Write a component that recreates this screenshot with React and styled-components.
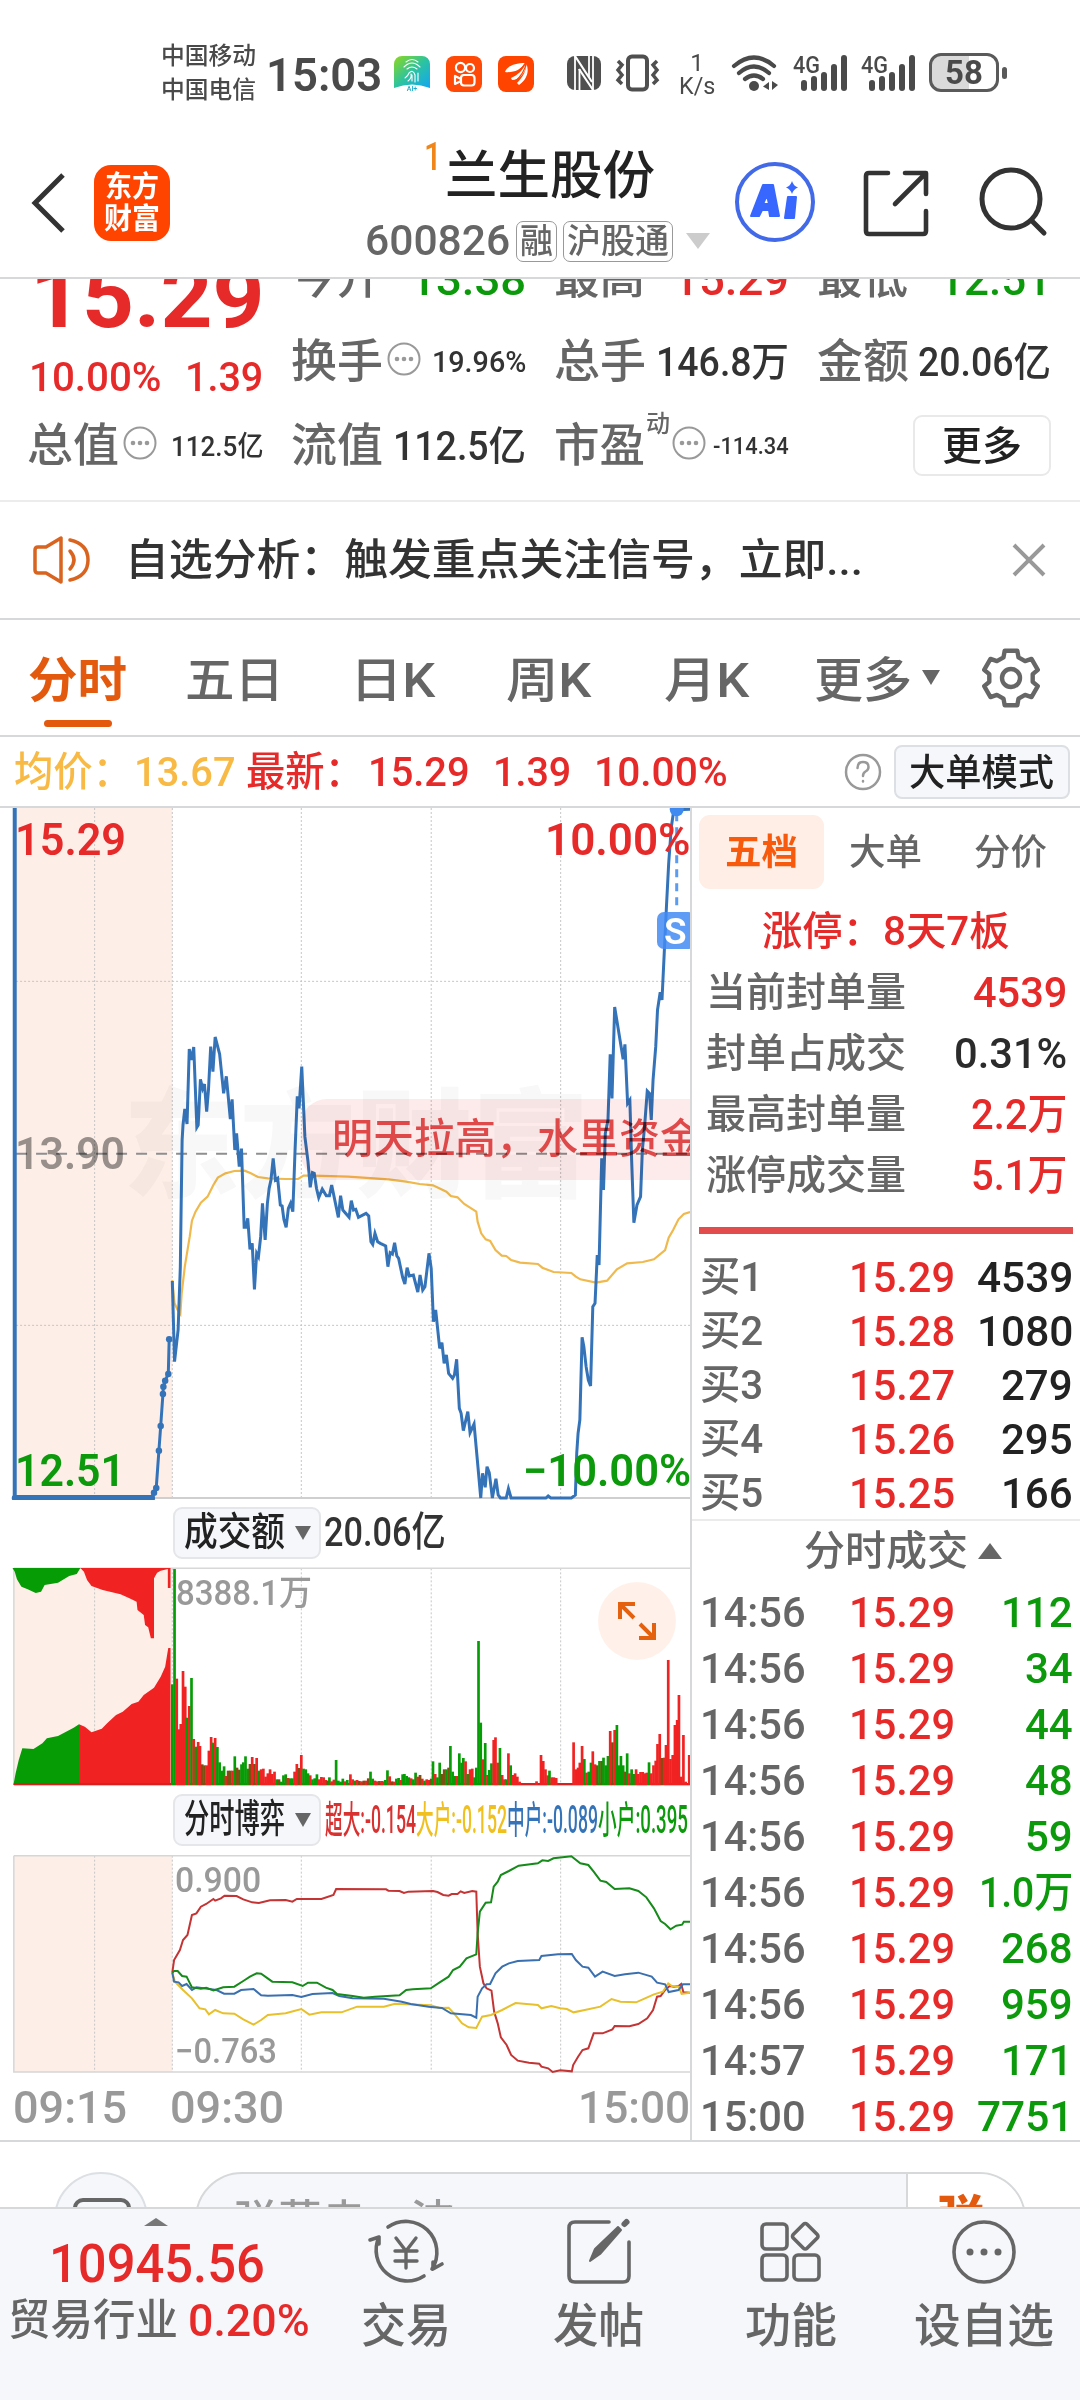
import React, { useLayoutEffect, useRef, useState } from "react";
import styled, { createGlobalStyle } from "styled-components";

const RED = "#e62a2a";
const GREEN = "#0c9a0c";
const GREY = "#666";
const INK = "#2b2b2b";
const ORANGE = "#e3590e";
const BLUE = "#3573b9";
const LINE = "#d6d8da";
const SOFT = "#f6f7fa";

const GlobalStyle = createGlobalStyle`
  * { box-sizing: border-box; }
  html, body { margin: 0; padding: 0; background: #fff; overflow-x: hidden; }
  body {
    font-family: Roboto, "Noto Sans CJK SC", sans-serif;
    font-weight: 500;
    line-height: 1;
    color: ${INK};
  }
`;

// Text squeezed or stretched to an exact width, like the auto-sizing labels on the phone
const FitBox = styled.span`
  display: block;
  flex: none;
  white-space: nowrap;
`;

const FitInner = styled.span`
  display: inline-block;
  transform-origin: left center;
`;

function Fit({ w, className, children }) {
  const ref = useRef(null);
  const [scale, setScale] = useState(1);
  useLayoutEffect(() => {
    setScale(w / ref.current.offsetWidth);
  }, [w, children]);
  return (
    <FitBox className={className} style={{ width: w }}>
      <FitInner ref={ref} style={{ transform: `scaleX(${scale})` }}>
        {children}
      </FitInner>
    </FitBox>
  );
}

const Screen = styled.div`
  width: 1080px;
  height: 2400px;
  overflow: hidden;
  display: flex;
  flex-direction: column;
  background: #fff;
`;

/* ---------- status bar ---------- */

const StatusBar = styled.div`
  height: 148px;
  flex: none;
  display: flex;
  align-items: flex-start;
  padding: 44px 0 0 161px;
  color: #4a4a4a;
`;

const Carriers = styled.div`
  display: flex;
  flex-direction: column;
  gap: 10px;
  font-size: 24px;
`;

const Clock = styled(Fit)`
  font-size: 47px;
  font-weight: 600;
  margin: 7px 12px 0 10px;
`;

const AppIcon = styled.svg`
  width: 36px;
  height: 36px;
  margin: 12px 16px 0 0;
  flex: none;
`;

const StatusIcon = styled.svg`
  flex: none;
  margin: 10px 0 0 ${(p) => p.$ml || 0}px;
`;

const NetSpeed = styled.div`
  width: 36px;
  margin: 8px 0 0 18px;
  display: flex;
  flex-direction: column;
  align-items: center;
  font-size: 24px;
  line-height: 23px;
  font-weight: 400;
`;

const Signal = styled.div`
  display: flex;
  align-items: flex-end;
  margin: 10px 0 0 ${(p) => p.$ml}px;
  height: 38px;
  flex: none;
`;

const SignalTag = styled(Fit)`
  align-self: flex-start;
  font-size: 24px;
  margin-top: -1px;
`;

const SignalSteps = styled.svg`
  margin-left: -19px;
`;

const Battery = styled.div`
  width: 70px;
  height: 39px;
  margin: 9px 0 0 13px;
  border: 3px solid #5a5a5a;
  border-radius: 12px;
  background: linear-gradient(to right, #dadada 58%, #fff 58%);
  display: flex;
  align-items: center;
  justify-content: center;
  font-size: 33px;
  font-weight: 700;
  flex: none;
`;

const BatteryTip = styled.div`
  width: 5px;
  height: 12px;
  border-radius: 3px;
  background: #5a5a5a;
  margin: 23px 0 0 3px;
`;

function SignalBars({ ml }) {
  return (
    <Signal $ml={ml}>
      <SignalTag w={27}>4G</SignalTag>
      <SignalSteps width="47" height="38" viewBox="0 0 47 38">
        {[11, 15, 19, 27, 36].map((h, i) => (
          <rect key={h} x={i * 10} y={37 - h} width="6" height={h} rx="3" fill="#4a4a4a" />
        ))}
      </SignalSteps>
    </Signal>
  );
}

function Status() {
  return (
    <StatusBar>
      <Carriers>
        <Fit w={95}>中国移动</Fit>
        <Fit w={95}>中国电信</Fit>
      </Carriers>
      <Clock w={116}>15:03</Clock>
      <AppIcon viewBox="0 0 36 36">
        <defs>
          <linearGradient id="finger" x1="0" y1="0" x2="1" y2="1">
            <stop offset="0" stopColor="#8fd81c" />
            <stop offset=".5" stopColor="#2cc3a0" />
            <stop offset="1" stopColor="#12a5f5" />
          </linearGradient>
        </defs>
        <path d="M8 0h20a8 8 0 0 1 8 8v24q-18-7-36 0V8a8 8 0 0 1 8-8z" fill="url(#finger)" />
        <g fill="none" stroke="#fff" strokeWidth="1.1" strokeLinecap="round">
          <path d="M12 6q6-5 12 0M10 11q8-8 16 0M13 13q5-4 10 0" />
          <path d="M11 22q3-2 4-5q4-4 6 2v7M14 25q4-3 3-7M18 19v6M24 17v8" />
        </g>
        <text x="18" y="35" fontSize="7" textAnchor="middle" fill="#1ba9c9" fontFamily="Roboto">AI+</text>
      </AppIcon>
      <AppIcon viewBox="0 0 36 36">
        <rect width="36" height="36" rx="8" fill="#ff4906" />
        <g fill="none" stroke="#fff" strokeWidth="2.2">
          <circle cx="14.500" cy="11.500" r="4.600" />
          <circle cx="24" cy="12" r="4" />
          <rect x="15" y="19" width="13.500" height="10.500" rx="3" />
          <path d="M15 23l-6-3v8l6-3" strokeLinejoin="round" />
        </g>
      </AppIcon>
      <AppIcon viewBox="0 0 36 36">
        <rect width="36" height="36" rx="8" fill="#ff4400" />
        <path d="M7 16C9 10 17 7 27 7C23 14 15 17 7 16zM13 22C20 19 25 14 27.500 8C29 15 22 24 14 24zM19 27C25 21 28 15 28.500 8C31 14 30 23 21 29z" fill="#fff" />
        <path d="M12 19.500C19 17 24 13 27 7.500M17 25.500C23 20 27 14 28 8" fill="none" stroke="#ff4400" strokeWidth="1.300" />
      </AppIcon>
      <StatusIcon width="34" height="38" viewBox="0 -1 34 38" $ml={17}>
        <rect y="1" width="34" height="34" rx="8" fill="#4f4f4f" />
        <path d="M8 1V35M26 35V1" fill="none" stroke="#fff" strokeWidth="1.800" />
        <path d="M8 1L25 27M12 14L26 35" fill="none" stroke="#fff" strokeWidth="2.200" />
        <path d="M12.500 14V35M22 1V22" fill="none" stroke="#fff" strokeWidth="1.800" />
      </StatusIcon>
      <StatusIcon width="46" height="38" viewBox="0 0 46 38" $ml={14}>
        <rect x="13" y="2.500" width="19" height="33" rx="4" fill="none" stroke="#4f4f4f" strokeWidth="4" />
        <path d="M3 7l4 4-4 5 4 5-4 5 4 4M42 7l-4 4 4 5-4 5 4 5-4 4" fill="none" stroke="#4f4f4f" strokeWidth="3.500" />
      </StatusIcon>
      <NetSpeed>
        <span>1</span>
        <Fit w={36}>K/s</Fit>
      </NetSpeed>
      <StatusIcon width="48" height="38" viewBox="0 0 48 38" $ml={16}>
        <g fill="none" stroke="#4a4a4a" strokeWidth="4.200" strokeLinecap="round">
          <path d="M3 12Q23-5 43 12" />
          <path d="M8 19Q23 6 38 19" />
          <path d="M14 25Q23 18 32 25" />
        </g>
        <circle cx="23" cy="32" r="5" fill="#4a4a4a" />
        <path d="M38 28v8l-6-3.500zM41 27l6 4-6 5z" fill="#4a4a4a" />
      </StatusIcon>
      <SignalBars ml={14} />
      <SignalBars ml={13} />
      <Battery>58</Battery>
      <BatteryTip />
    </StatusBar>
  );
}

/* ---------- header ---------- */

const HeaderBar = styled.header`
  height: 131px;
  flex: none;
  display: flex;
  align-items: flex-start;
  border-bottom: 2px solid ${LINE};
`;

const HeaderIcon = styled.svg`
  flex: none;
  margin: ${(p) => p.$mt}px 0 0 ${(p) => p.$ml}px;
`;

const Brand = styled.div`
  width: 76px;
  height: 76px;
  margin: 17px 0 0 27px;
  border-radius: 17px;
  background: #ff4400;
  color: #fff;
  font-size: 29px;
  font-weight: 600;
  display: flex;
  flex-direction: column;
  align-items: center;
  padding-top: 8px;
  gap: 3px;
  flex: none;
`;

const Titles = styled.div`
  width: 350px;
  margin-left: 195px;
  flex: none;
`;

const StockName = styled.div`
  display: flex;
  padding-left: 59px;
  height: 71px;
`;

const Rank = styled(Fit)`
  color: #f08519;
  font-size: 38px;
  font-weight: 500;
  margin-top: -10px;
`;

const Name = styled(Fit)`
  font-size: 52px;
  margin: 3px 0 0 3px;
  color: #222;
`;

const StockCode = styled.div`
  display: flex;
  align-items: center;
  height: 44px;
  font-size: 42px;
  color: ${GREY};
`;

const Badge = styled.span`
  height: 41px;
  margin-left: ${(p) => p.$ml}px;
  padding: 2px 3px 0;
  border: 1.5px solid #999;
  border-radius: 7px;
  font-size: 34px;
`;

const Triangle = styled.i`
  display: block;
  width: 0;
  height: 0;
  flex: none;
  border: ${(p) => p.$w / 2}px solid transparent;
  border-${(p) => (p.$up ? "bottom" : "top")}: ${(p) => p.$h}px solid ${(p) => p.$c};
  border-${(p) => (p.$up ? "top" : "bottom")}: 0;
  margin-left: ${(p) => p.$ml || 0}px;
`;

function Header() {
  return (
    <HeaderBar>
      <HeaderIcon $mt={23} $ml={30} width="37" height="64" viewBox="0 0 37 64">
        <path d="M33 4L5 32l28 28" fill="none" stroke="#333" strokeWidth="5" />
      </HeaderIcon>
      <Brand>
        <Fit w={54}>东方</Fit>
        <Fit w={56}>财富</Fit>
      </Brand>
      <Titles>
        <StockName>
          <Rank w={18}>1</Rank>
          <Name w={210}>兰生股份</Name>
        </StockName>
        <StockCode>
          <Fit w={145}>600826</Fit>
          <Badge $ml={6}><Fit w={33}>融</Fit></Badge>
          <Badge $ml={6}><Fit w={102}>沪股通</Fit></Badge>
          <Triangle $w={24} $h={16} $c="#ccc" $ml={13} />
        </StockCode>
      </Titles>
      <HeaderIcon $mt={13} $ml={19} width="82" height="82" viewBox="0 0 82 82">
        <circle cx="41" cy="41" r="38" fill="none" stroke="#4169e8" strokeWidth="4" />
        <g fill="#3867ff" stroke="#3867ff" strokeWidth="2" strokeLinejoin="round">
          <path fillRule="evenodd" d="M29 24h10l6 31h-9l-1-6h-7l-3 6h-8zM33 34l-4 9h6z" />
          <path d="M54 36h8l-2 21h-9z" />
        </g>
        <path d="M58 20q1.500 5 6 6.500-4.500 1.500-6 6.500-1.500-5-6-6.500 4.500-1.500 6-6.500z" fill="#3867ff" />
      </HeaderIcon>
      <HeaderIcon $mt={21} $ml={46} width="68" height="68" viewBox="0 0 68 68">
        <g fill="none" stroke="#333" strokeWidth="4.600" strokeLinecap="round" strokeLinejoin="round">
          <path d="M26 4H7q-3 0-3 3v55q0 3 3 3h54q3 0 3-3V42" />
          <path d="M43 4h21v21M63 5L33 35" />
        </g>
      </HeaderIcon>
      <HeaderIcon $mt={19} $ml={48} width="72" height="72" viewBox="0 0 72 72">
        <g fill="none" stroke="#333" strokeWidth="5" strokeLinecap="round">
          <circle cx="33" cy="32" r="29" />
          <path d="M54 54l12 12" />
        </g>
      </HeaderIcon>
    </HeaderBar>
  );
}

/* ---------- quote summary ---------- */

const QuoteSection = styled.section`
  height: 223px;
  flex: none;
  overflow: hidden;
  border-bottom: 2px solid #ececec;
`;

const QuoteGrid = styled.div`
  margin-top: -44px;
  padding-left: 27px;
  display: grid;
  grid-template-columns: 264px 263px 263px 234px;
  grid-template-rows: 84px 84px 84px;
`;

const MainPrice = styled.div`
  grid-row: span 2;
  color: ${RED};
  padding: 18px 0 0 3px;
`;

const BigPrice = styled(Fit)`
  font-size: 88px;
  font-weight: 700;
`;

const Change = styled.div`
  display: flex;
  gap: 23px;
  font-size: 40px;
  margin: 17px 0 0 -1px;
`;

const Cell = styled.div`
  display: flex;
  align-items: center;
  padding-right: ${(p) => (p.$last ? 0 : 28)}px;
`;

const CellLabel = styled(Fit)`
  font-size: 46px;
  color: ${GREY};
`;

const CellValue = styled(Fit)`
  font-size: ${(p) => p.$size || 40}px;
  color: ${(p) => p.$c || "#333"};
  margin-left: auto;
  padding-top: ${(p) => p.$drop || 3}px;
`;

const Info = styled.svg`
  width: 34px;
  height: 34px;
  flex: none;
  margin-left: 4px;
  margin-top: -4px;
`;

const Dynamic = styled.span`
  align-self: flex-start;
  margin: 9px -2px 0 1px;
  font-size: 24px;
  color: ${GREY};
`;

const MoreButton = styled.button`
  margin-left: 96px;
  width: 139px;
  height: 61px;
  border: 2px solid #e9e9e9;
  border-radius: 9px;
  background: #fff;
  font: 500 40px "Noto Sans CJK SC", sans-serif;
  line-height: 1;
  color: #222;
  padding: 0 0 4px 27px;
  text-align: left;
`;

function InfoDot() {
  return (
    <Info viewBox="0 0 34 34">
      <circle cx="17" cy="17" r="15.500" fill="none" stroke="#999" strokeWidth="2" />
      {[10, 17, 24].map((x) => (
        <circle key={x} cx={x} cy="17" r="2.300" fill="#999" />
      ))}
    </Info>
  );
}

function Quote() {
  return (
    <QuoteSection>
      <QuoteGrid>
        <MainPrice>
          <BigPrice w={234}>15.29</BigPrice>
          <Change>
            <Fit w={133}>10.00%</Fit>
            <Fit w={78}>1.39</Fit>
          </Change>
        </MainPrice>
        <Cell><CellLabel w={91}>今开</CellLabel><CellValue $size={44} $drop={6} $c={GREEN} w={116}>13.38</CellValue></Cell>
        <Cell><CellLabel w={91}>最高</CellLabel><CellValue $size={44} $drop={6} $c={RED} w={116}>15.29</CellValue></Cell>
        <Cell $last><CellLabel w={91}>最低</CellLabel><CellValue $size={44} $drop={6} $c={GREEN} w={112}>12.51</CellValue></Cell>
        <Cell><CellLabel w={92}>换手</CellLabel><InfoDot /><CellValue $size={29} w={94}>19.96%</CellValue></Cell>
        <Cell><CellLabel w={92}>总手</CellLabel><CellValue w={133}>146.8万</CellValue></Cell>
        <Cell $last><CellLabel w={92}>金额</CellLabel><CellValue w={133}>20.06亿</CellValue></Cell>
        <Cell><CellLabel w={92}>总值</CellLabel><InfoDot /><CellValue $size={28} w={92}>112.5亿</CellValue></Cell>
        <Cell><CellLabel w={92}>流值</CellLabel><CellValue w={133}>112.5亿</CellValue></Cell>
        <Cell><CellLabel w={91}>市盈</CellLabel><Dynamic>动</Dynamic><InfoDot /><CellValue $size={23} w={76}>-114.34</CellValue></Cell>
        <Cell $last><MoreButton>更多</MoreButton></Cell>
      </QuoteGrid>
    </QuoteSection>
  );
}

/* ---------- notice ---------- */

const NoticeBar = styled.div`
  height: 118px;
  flex: none;
  display: flex;
  align-items: center;
  padding: 0 33px 0 32px;
  border-bottom: 2px solid ${LINE};
`;

const NoticeText = styled(Fit)`
  margin-left: 33px;
  font-size: 43px;
  color: #333;
`;

const Close = styled.svg`
  margin-left: auto;
  width: 36px;
  height: 36px;
`;

function Notice() {
  return (
    <NoticeBar>
      <svg width="60" height="50" viewBox="0 0 60 50" fill="none" stroke="#d9641f" strokeWidth="3.500" strokeLinejoin="round" strokeLinecap="round">
        <path d="M29 3v44L14 38H6q-3 0-3-3V15q0-3 3-3h8z" />
        <path d="M38 16q8 9 0 18M38 5q18 4 18 20T38 45" />
      </svg>
      <NoticeText w={738}>自选分析：触发重点关注信号，立即...</NoticeText>
      <Close viewBox="0 0 36 36" stroke="#999" strokeWidth="4">
        <path d="M3 3l30 30M33 3L3 33" />
      </Close>
    </NoticeBar>
  );
}

/* ---------- period tabs ---------- */

const TabBar = styled.nav`
  height: 117px;
  flex: none;
  display: flex;
  align-items: flex-start;
  padding: 37px 0 0 28px;
  border-bottom: 2px solid ${LINE};
`;

const Tab = styled.div`
  margin-left: ${(p) => p.$ml || 0}px;
  font-size: 48px;
  color: ${(p) => (p.$active ? ORANGE : GREY)};
  font-weight: ${(p) => (p.$active ? 700 : 500)};
  display: flex;
  flex-direction: column;
  align-items: center;
`;

const Underline = styled.div`
  width: 68px;
  height: 7px;
  border-radius: 4px;
  margin: 15px 0 0 0;
  background: ${ORANGE};
`;

const TabArrow = styled.div`
  margin: 13px 0 0 10px;
`;

// outline of a six-toothed cog
function gearPath(cx, cy, inner, outer) {
  const pts = [];
  for (let i = 0; i < 6; i++) {
    const mid = -90 + i * 60;
    [[-20, inner], [-13, outer], [13, outer], [20, inner]].forEach(([da, r]) => {
      const a = ((mid + da) * Math.PI) / 180;
      pts.push(`${(cx + r * Math.cos(a)).toFixed(1)} ${(cy + r * Math.sin(a)).toFixed(1)}`);
    });
  }
  return `M${pts.join("L")}Z`;
}

const Gear = styled.svg`
  margin: -11px 0 0 41px;
`;

function PeriodTabs() {
  return (
    <TabBar>
      <Tab $active>
        <Fit w={99}>分时</Fit>
        <Underline />
      </Tab>
      <Tab $ml={58}><Fit w={99}>五日</Fit></Tab>
      <Tab $ml={66}><Fit w={85}>日K</Fit></Tab>
      <Tab $ml={71}><Fit w={85}>周K</Fit></Tab>
      <Tab $ml={73}><Fit w={85}>月K</Fit></Tab>
      <Tab $ml={65}><Fit w={98}>更多</Fit></Tab>
      <TabArrow><Triangle $w={18} $h={15} $c={GREY} /></TabArrow>
      <Gear width="60" height="64" viewBox="0 0 60 64" fill="none" stroke={GREY} strokeWidth="4.400" strokeLinejoin="round">
        <path d={gearPath(30, 32, 22, 28)} />
        <circle cx="30" cy="32" r="9" />
      </Gear>
    </TabBar>
  );
}

/* ---------- average / last line ---------- */

const InfoLine = styled.div`
  height: 71px;
  flex: none;
  display: flex;
  align-items: center;
  padding: 1px 10px 0 14px;
  font-size: 41px;
  color: ${RED};
  border-bottom: 2px solid ${LINE};
`;

const Average = styled.div`
  display: flex;
  gap: 2px;
  color: #f8ba45;
  margin-right: 10px;
`;

const Latest = styled.div`
  display: flex;
  gap: 23px;
`;

const LatestLabel = styled(Fit)`
  margin-right: -19px;
`;

const Help = styled.svg`
  margin-left: auto;
`;

const ModeButton = styled.button`
  width: 176px;
  height: 54px;
  margin-left: 12px;
  border: 2px solid #dcdfe3;
  border-radius: 8px;
  background: ${SOFT};
  font: 500 37px "Noto Sans CJK SC", sans-serif;
  line-height: 1;
  color: #222;
  padding: 0 0 3px 13px;
`;

function PriceInfo() {
  return (
    <InfoLine>
      <Average>
        <Fit w={118}>均价：</Fit>
        <Fit w={102}>13.67</Fit>
      </Average>
      <Latest>
        <LatestLabel w={118}>最新：</LatestLabel>
        <Fit w={102}>15.29</Fit>
        <Fit w={78}>1.39</Fit>
        <Fit w={134}>10.00%</Fit>
      </Latest>
      <Help width="38" height="38" viewBox="0 0 38 38" fill="none" stroke="#999" strokeWidth="2.500" strokeLinecap="round">
        <circle cx="19" cy="19" r="17" />
        <path d="M13.500 15q0-6 5.500-6t5.500 5q0 3-3 4.500-2.500 1.500-2.500 4.500M19 28v.5" />
      </Help>
      <ModeButton><Fit w={145}>大单模式</Fit></ModeButton>
    </InfoLine>
  );
}

/* ---------- charts ---------- */

const Board = styled.main`
  height: 1334px;
  flex: none;
  display: flex;
  border-bottom: 2px solid ${LINE};
`;

const Charts = styled.div`
  width: 692px;
  flex: none;
  border-right: 2px solid ${LINE};
`;

const Plot = styled.div`
  position: relative;
  height: ${(p) => p.$h}px;
  overflow: hidden;
`;

const Canvas = styled.svg`
  display: block;
  width: 691px;
  height: 100%;

  & path, & line, & polyline {
    vector-effect: non-scaling-stroke;
  }
`;

const PriceCanvas = styled(Canvas)`
  position: relative;
  mix-blend-mode: multiply;
`;

const PlotLabel = styled(Fit)`
  position: absolute;
  font-size: ${(p) => p.$size || 44}px;
  font-weight: ${(p) => p.$weight || 600};
  color: ${(p) => p.$c};
  ${(p) => (p.$right !== undefined ? `right: ${p.$right}px;` : `left: ${p.$left}px;`)}
  top: ${(p) => p.$top}px;
`;

const Watermark = styled(Fit)`
  position: absolute;
  left: 123px;
  top: 281px;
  font-size: 118px;
  font-weight: 900;
  color: rgba(60, 60, 60, 0.035);
`;

const Banner = styled.div`
  position: absolute;
  left: 301px;
  top: 291px;
  width: 400px;
  height: 81px;
  border-radius: 26px 0 0 26px;
  background: rgba(235, 60, 60, 0.11);
  color: rgba(219, 50, 50, 0.88);
  font-size: 41px;
  white-space: nowrap;
  padding: 20px 0 0 31px;
`;

const SellMark = styled.div`
  position: absolute;
  left: 657px;
  top: 104px;
  width: 38px;
  height: 37px;
  border-radius: 7px;
  background: rgba(66, 139, 245, 0.85);
  color: #fff;
  font-size: 37px;
  font-weight: 600;
  padding: 1px 0 0 7px;
`;

const PlotHeader = styled.div`
  height: 65px;
  padding-left: 173px;
  display: flex;
  align-items: center;
`;

const Picker = styled.div`
  width: 148px;
  height: 52px;
  flex: none;
  border: 2px solid #e4e6e9;
  border-radius: 9px;
  background: ${SOFT};
  display: flex;
  align-items: center;
  padding-left: 9px;
  font-size: 39px;
  color: #222;
`;

const Turnover = styled(Fit)`
  margin-left: 3px;
  font-size: 41px;
  color: #333;
`;

const Legend = styled.div`
  display: flex;
  margin-left: 4px;
  font-size: 38px;
`;

const LegendItem = styled(Fit)`
  color: ${(p) => p.$c};
`;

const TimeAxis = styled.div`
  height: 66px;
  display: flex;
  padding: 10px 0 0 13px;
  font-size: 45px;
  color: #999;

  & > :nth-child(2) { margin-left: 43px; }
  & > :nth-child(3) { margin-left: auto; }
`;

const Expand = styled.div`
  position: absolute;
  left: 598px;
  top: 17px;
  width: 78px;
  height: 78px;
  border-radius: 50%;
  background: #fff1ea;
  display: flex;
  align-items: center;
  justify-content: center;
`;

const GRID_X = [212, 386, 675, 966, 1256];

const priceLine =
  "386,1443 391,1685 399,1590 404,1400 406,1200 408,1020 410,975 414,927 419,972 424,747 429,780 434,741 441,982 444,975 449,838 454,866 458,852 463,935 467,870 472,740 477,815 482,711 492,762 501,880 507,829 516,957 520,898 526,1050 530,1000 536,1100 541,1046 547,1282 551,1282 555,1255 560,1348 565,1330 570,1468 575,1360 579,1370 584,1310 588,1210 594,1320 599,1210 603,1165 607,1140 612,1075 617,1140 622,1135 628,1215 632,1218 636,1258 641,1282 646,1225 651,1210 656,1235 661,1050 666,889 670,925 676,800 683,1010 690,1085 695,1162 700,1118 704,1120 709,1165 714,1193 722,1167 731,1187 738,1187 743,1155 758,1252 763,1187 768,1230 782,1252 787,1202 792,1230 797,1228 803,1252 820,1240 826,1248 831,1325 835,1333 840,1300 846,1325 852,1330 864,1338 869,1400 874,1358 879,1362 884,1328 889,1368 893,1375 902,1432 907,1452 912,1403 917,1428 926,1425 936,1476 941,1425 947,1470 952,1460 961,1360 966,1405 971,1565 976,1530 985,1645 990,1628 995,1690 1000,1665 1005,1720 1014,1735 1018,1725 1023,1678 1029,1825 1033,1840 1038,1892 1048,1835 1053,1898 1062,1872 1068,1960 1077,2094 1081,2020 1087,2062 1091,2000 1096,2018 1103,2094 1111,2036 1116,2085 1121,2094 1134,2094 1139,2066 1145,2094 1223,2094 1228,2088 1234,2094 1280,2094 1289,2085 1292,1960 1295,1900 1299,1860 1304,1612 1308,1640 1313,1700 1318,1740 1323,1758 1328,1520 1333,1510 1338,1365 1342,1395 1348,1075 1352,1170 1356,1000 1362,960 1367,763 1371,895 1377,621 1396,778 1400,733 1406,910 1411,900 1415,1080 1420,1268 1427,1215 1435,1190 1439,1050 1444,980 1450,873 1455,880 1459,960 1463,840 1469,740 1473,630 1479,577 1483,600 1488,460 1493,320 1498,190 1504,80 1509,35 1516,29 1546,28";

const averageLine =
  "386,1440 391,1510 398,1530 404,1542 407,1480 414,1400 425,1310 430,1262 438,1235 450,1208 465,1190 478,1155 488,1133 505,1120 525,1113 548,1112 562,1120 578,1131 600,1135 640,1137 668,1137 680,1127 700,1127 780,1130 870,1138 910,1145 940,1152 970,1156 1000,1175 1010,1188 1025,1192 1040,1212 1067,1235 1070,1265 1078,1300 1088,1318 1098,1323 1110,1350 1124,1367 1134,1368 1145,1380 1165,1388 1205,1392 1215,1403 1240,1416 1280,1419 1290,1430 1300,1438 1335,1448 1360,1442 1382,1408 1405,1390 1440,1386 1465,1378 1490,1350 1498,1313 1508,1290 1520,1258 1532,1242 1546,1236";

const auction = "340,2094 345,2078 350,2064 356,1952 360,1878 365,1782 366,1760 370,1742 377,1722 379,1618";

const flows = [
  ["#c43434", "386,548 390,510 403,480 410,450 420,435 430,375 440,370 450,350 462,342 478,327 482,332 495,325 503,317 530,318 545,328 565,337 580,339 605,331 640,330 655,335 665,327 720,327 747,315 753,297 865,298 870,302 895,303 905,309 915,305 970,303 980,306 993,315 1005,317 1012,312 1025,312 1032,304 1040,309 1058,303 1067,305 1070,430 1075,530 1083,580 1090,595 1101,602 1107,665 1115,700 1122,742 1135,765 1145,795 1160,812 1185,818 1208,821 1213,830 1228,835 1238,846 1255,841 1281,844 1284,825 1295,800 1305,780 1318,775 1330,730 1350,730 1372,718 1377,708 1410,709 1430,702 1450,685 1463,660 1472,620 1480,618 1490,600 1500,588 1510,590 1520,588 1526,582 1531,607 1546,608"],
  ["#e8c02c", "386,548 392,575 410,600 430,625 447,655 460,658 468,673 482,660 500,670 525,671 545,688 568,704 585,690 600,675 640,670 675,657 693,674 720,667 765,667 800,650 860,650 885,641 965,646 985,654 1005,653 1020,675 1035,700 1050,712 1067,714 1080,680 1100,675 1125,660 1155,639 1205,645 1213,655 1235,648 1255,655 1270,657 1285,667 1310,660 1345,650 1370,627 1390,635 1425,637 1445,625 1465,613 1485,605 1497,580 1505,588 1520,590 1527,612 1546,608"],
  ["#3a70b0", "386,548 390,575 400,577 408,588 418,582 430,600 440,592 485,600 502,611 525,611 540,600 568,597 585,616 600,617 655,615 675,621 700,612 745,609 760,618 790,625 860,626 900,635 920,642 960,650 990,654 1010,670 1055,675 1067,683 1070,620 1080,595 1090,583 1098,582 1110,550 1125,530 1140,520 1160,513 1208,510 1213,498 1250,493 1281,492 1290,510 1305,530 1318,533 1333,560 1350,545 1377,558 1400,553 1430,548 1460,560 1472,578 1490,583 1498,606 1520,600 1530,583 1546,583"],
  ["#168a1a", "386,548 390,543 398,543 408,558 418,560 430,592 450,596 462,593 478,601 500,592 525,590 545,573 560,560 575,550 585,551 610,575 655,577 678,588 690,578 710,578 730,593 745,600 755,612 790,618 815,623 840,620 895,616 910,600 925,598 965,595 985,577 1005,560 1015,540 1030,530 1045,505 1067,493 1070,430 1075,365 1088,338 1100,337 1106,290 1115,275 1122,255 1140,243 1162,227 1205,220 1215,211 1228,213 1240,205 1280,199 1300,220 1318,225 1330,245 1345,272 1358,276 1377,297 1410,295 1430,303 1448,322 1465,355 1480,393 1490,402 1502,418 1515,407 1528,404 1532,395 1546,395"],
];

// x, top, colour of each minute: r(ed), g(reen), m(ixed)
const volumes =
  "386,553,g 391,207,g 396,536,r 401,688,r 405,672,r 410,513,r 415,560,r 419,653,g 424,618,r 429,534,g 434,717,r 439,740,g 444,726,r 448,738,r 453,793,m 458,796,m 463,796,r 468,752,r 473,711,r 478,728,g 482,714,r 487,741,g 492,787,g 497,812,g 502,799,g 506,828,r 511,812,m 516,812,m 521,812,r 526,769,g 531,803,m 536,809,m 541,793,g 545,787,g 550,769,g 555,806,g 560,792,m 565,771,r 570,792,m 575,774,r 580,812,g 585,808,r 590,806,r 595,830,r 600,820,r 605,808,r 610,822,r 615,815,r 620,838,g 625,838,m 630,845,g 635,826,g 640,823,g 645,834,r 650,835,g 655,835,g 660,815,r 665,792,r 670,804,m 675,765,r 680,806,g 685,808,g 690,820,g 695,826,r 700,838,g 705,835,g 710,823,g 715,838,r 720,831,r 725,832,r 730,840,r 734,842,m 738,832,g 743,844,r 748,839,r 753,780,g 758,842,g 763,845,g 768,836,g 773,844,r 778,840,g 785,823,r 790,838,r 795,842,g 800,840,r 805,843,m 810,844,r 815,842,m 820,842,r 825,835,m 830,815,g 835,836,g 840,842,r 845,844,r 850,843,m 855,843,r 860,844,r 863,840,g 868,811,g 873,829,r 878,844,m 883,845,r 888,836,g 893,834,g 898,840,r 902,823,g 906,822,g 911,828,g 916,832,g 921,835,r 926,838,g 931,818,g 936,830,r 941,825,m 946,836,r 951,842,g 956,838,r 961,840,r 966,836,m 970,784,g 975,822,r 980,832,g 985,788,g 990,822,m 995,808,m 1000,808,g 1005,803,m 1009,738,g 1014,815,g 1019,828,g 1024,828,r 1029,760,g 1034,788,g 1038,774,g 1043,784,r 1048,822,g 1053,808,r 1058,806,r 1063,832,g 1067,803,g 1072,423,g 1077,668,g 1082,778,r 1087,729,g 1092,825,r 1096,810,g 1101,790,g 1106,720,r 1110,712,r 1115,788,r 1120,744,g 1125,825,r 1130,838,r 1134,838,g 1139,760,r 1144,796,g 1149,825,r 1154,820,r 1159,830,r 1164,845,r 1202,844,r 1212,765,r 1217,783,r 1222,808,r 1227,826,r 1231,812,g 1236,832,r 1241,832,r 1246,834,r 1285,727,r 1290,808,r 1295,803,r 1299,788,r 1304,738,r 1309,777,g 1314,818,r 1319,815,g 1324,788,g 1328,754,r 1333,793,r 1338,796,m 1343,783,g 1348,783,m 1352,773,g 1357,796,g 1362,768,g 1367,693,r 1372,727,m 1377,690,r 1382,675,g 1386,796,g 1391,768,g 1396,796,g 1401,815,m 1405,760,g 1410,820,r 1415,808,g 1420,822,g 1425,808,r 1430,822,r 1435,816,r 1440,816,r 1445,820,r 1449,818,r 1454,787,g 1459,820,r 1464,796,r 1469,782,r 1473,732,r 1478,702,r 1483,774,m 1488,773,r 1492,735,r 1497,480,r 1502,777,r 1507,765,r 1512,675,r 1517,660,r 1521,585,r 1526,830,r 1531,705,r 1536,845,r 1544,765,r"
    .split(" ")
    .map((s) => s.split(","));

const VOLUME_COLORS = { r: "#f02222", g: "#069c06", m: "#7c5010" };

function Grid({ top, bottom }) {
  return (
    <>
      <rect x="31" y={top} width="355" height={bottom - top} fill="#fdeee8" />
      {GRID_X.map((x) => (
        <line key={x} x1={x} x2={x} y1={top} y2={bottom} stroke="#c6c6c6" strokeDasharray="2 2" />
      ))}
    </>
  );
}

function PricePlot() {
  return (
    <Plot $h={692}>
      <PlotLabel $c="#999" $left={15} $top={324} w={110}>13.90</PlotLabel>
      <Watermark w={466}>东方财富</Watermark>
      <Banner>明天拉高，水里资金</Banner>
      <PriceCanvas viewBox="0 24 1548 2076" preserveAspectRatio="none" fill="none">
        <Grid top={24} bottom={2094} />
        <line x1="36" x2="1546" y1="544" y2="544" stroke="#c6c6c6" strokeDasharray="2 2" />
        <line x1="36" x2="1546" y1="1576" y2="1576" stroke="#c6c6c6" strokeDasharray="2 2" />
        <line x1="36" x2="1546" y1="1061" y2="1061" stroke="#8f8f8f" strokeWidth="2" strokeDasharray="11 9" />
        <line x1="340" x2="1546" y1="2094" y2="2094" stroke="#cfcfcf" strokeWidth="2" />
        <polyline points={averageLine} stroke="#f0b94e" strokeWidth="2.200" />
        <path d="M33 24V2094" stroke={BLUE} strokeWidth="4" />
        <path d="M33 2094H340" stroke={BLUE} strokeWidth="6" strokeLinecap="round" />
        <polyline points={auction} stroke={BLUE} strokeWidth="3" />
        {auction.split(" ").map((p) => (
          <path key={p} d={`M${p}h.01`} stroke={BLUE} strokeWidth="6.500" strokeLinecap="round" />
        ))}
        <polyline points={priceLine} stroke={BLUE} strokeWidth="3" />
        <line x1="1516" x2="1516" y1="40" y2="330" stroke="#5b9bf0" strokeWidth="3" strokeDasharray="8 6" />
        <path d="M1516 28h.01" stroke="#3f8af0" strokeWidth="14" strokeLinecap="round" />
      </PriceCanvas>
      <PlotLabel $c={RED} $left={15} $top={10} w={111}>15.29</PlotLabel>
      <PlotLabel $c={RED} $right={-1} $top={10} w={146}>10.00%</PlotLabel>
      <PlotLabel $c={GREEN} $left={15} $top={641} w={110}>12.51</PlotLabel>
      <PlotLabel $c={GREEN} $right={-1} $top={641} w={168}>−10.00%</PlotLabel>
      <SellMark>S</SellMark>
    </Plot>
  );
}

function VolumePlot() {
  return (
    <Plot $h={222}>
      <Canvas viewBox="0 195 1548 666" preserveAspectRatio="none">
        <Grid top={205} bottom={855} />
        <line x1="31" x2="1546" y1="205" y2="205" stroke="#d8d8d8" strokeWidth="1.500" />
        <line x1="31" x2="31" y1="205" y2="855" stroke="#d8d8d8" strokeWidth="1.500" />
        <polygon fill="#069c06" points="28,204 180,204 172,222 155,228 130,248 100,255 92,275 80,279 62,268 48,260 38,238 33,215" />
        <polygon fill="#f02222" points="180,204 382,204 382,264 376,264 376,207 360,212 352,218 345,235 345,415 338,415 332,382 325,375 322,345 308,330 306,305 290,295 270,283 230,270 205,258 195,240 188,215" />
        <polygon fill="#069c06" points="30,855 35,820 42,780 50,745 75,747 95,730 105,715 130,708 165,683 177,673 177,855" />
        <polygon fill="#f02222" points="177,673 190,680 205,697 228,686 240,670 260,645 275,635 295,612 310,605 322,585 345,563 360,530 370,500 375,460 377,444 382,444 382,855 177,855" />
        <rect x="31" y="849" width="1516" height="7" fill="#d92020" />
        {volumes.map(([x, top, c]) => (
          <rect key={x} x={x - 3} y={top} width="6" height={855 - top} fill={VOLUME_COLORS[c]} />
        ))}
      </Canvas>
      <PlotLabel $c="#999" $size={35} $weight={500} $left={176} $top={11} w={136}>8388.1万</PlotLabel>
      <Expand>
        <svg width="40" height="40" viewBox="0 0 40 40" fill="none" stroke="#e3610f" strokeWidth="4">
          <path d="M18 3H3v15M3 3l14 14M22 37h15V22M37 37L23 23" />
        </svg>
      </Expand>
    </Plot>
  );
}

function FlowPlot() {
  return (
    <Plot $h={223}>
      <Canvas viewBox="0 186 1548 669" preserveAspectRatio="none" fill="none">
        <Grid top={197} bottom={846} />
        <path d="M31 197H1546M31 197V846H1546" stroke="#d6d6d6" strokeWidth="1.500" />
        {flows.map(([color, points]) => (
          <polyline key={color} points={points} stroke={color} strokeWidth="2" />
        ))}
      </Canvas>
      <PlotLabel $c="#999" $size={35} $weight={500} $left={175} $top={11} w={86}>0.900</PlotLabel>
      <PlotLabel $c="#999" $size={35} $weight={500} $left={175} $top={182} w={102}>−0.763</PlotLabel>
    </Plot>
  );
}

/* ---------- order book ---------- */

const Book = styled.aside`
  flex: 1;
  padding: 7px 7px 0 7px;
`;

const BookTabs = styled.div`
  height: 74px;
  display: flex;
  font-size: 36px;
  color: ${GREY};
`;

const BookTab = styled.div`
  width: 124.5px;
  display: flex;
  align-items: center;
  justify-content: center;
  border-radius: 11px;
  padding-top: 2px;
  ${(p) => p.$active && `background: #feeee6; color: #f75a0c; font-weight: 700;`}
`;

const Streak = styled.div`
  display: flex;
  justify-content: center;
  padding: 23px 1px 0 0;
  height: 73px;
  font-size: 40px;
  color: ${RED};
`;

const SealRow = styled.div`
  display: flex;
  align-items: center;
  justify-content: space-between;
  height: 61px;
  padding: 1px 6px 0 7px;
  font-size: 42px;
  color: ${(p) => p.$c};
`;

const SealLabel = styled(Fit)`
  color: ${GREY};
  font-size: 40px;
`;

const RedRule = styled.div`
  height: 7px;
  margin: 21px 0 15px;
  background: #e24c4c;
`;

const BookRow = styled.div`
  display: grid;
  grid-template-columns: 149px 106px 1fr;
  align-items: center;
  height: ${(p) => p.$h}px;
  padding: 3px 0 0 1px;
  font-size: 42px;
`;

const Side = styled(Fit)`
  color: ${GREY};
  font-size: ${(p) => p.$size || 41}px;
`;

const Amount = styled(Fit)`
  justify-self: end;
  color: ${(p) => p.$c};
`;

const Deal = styled(Fit)`
  color: ${RED};
`;

const TradesTitle = styled.div`
  margin: 0 -7px;
  height: 64px;
  border-top: 2px solid #ebebeb;
  display: flex;
  align-items: center;
  padding: 0 0 2px 112px;
  font-size: 41px;
  color: ${GREY};
`;

const seals = [
  ["当前封单量", "4539", 94, RED],
  ["封单占成交", "0.31%", 113, INK],
  ["最高封单量", "2.2万", 96, RED],
  ["涨停成交量", "5.1万", 96, RED],
];

const bids = [
  ["买1", "15.29", "4539"],
  ["买2", "15.28", "1080"],
  ["买3", "15.27", "279"],
  ["买4", "15.26", "295"],
  ["买5", "15.25", "166"],
];

const trades = [
  ["14:56", "112"],
  ["14:56", "34"],
  ["14:56", "44"],
  ["14:56", "48"],
  ["14:56", "59"],
  ["14:56", "1.0万"],
  ["14:56", "268"],
  ["14:56", "959"],
  ["14:57", "171"],
  ["15:00", "7751"],
];

const amountWidth = (s) => (s.includes("万") ? 94 : s.length * 24);

function OrderBook() {
  return (
    <Book>
      <BookTabs>
        <BookTab $active><Fit w={73}>五档</Fit></BookTab>
        <BookTab><Fit w={73}>大单</Fit></BookTab>
        <BookTab><Fit w={73}>分价</Fit></BookTab>
      </BookTabs>
      <Streak><Fit w={247}>涨停：8天7板</Fit></Streak>
      {seals.map(([label, value, w, color]) => (
        <SealRow key={label} $c={color}>
          <SealLabel w={200}>{label}</SealLabel>
          <Fit w={w}>{value}</Fit>
        </SealRow>
      ))}
      <RedRule />
      {bids.map(([side, price, amount]) => (
        <BookRow key={side} $h={54}>
          <Side w={63}>{side}</Side>
          <Deal w={106}>{price}</Deal>
          <Amount $c="#222" w={amountWidth(amount)}>{amount}</Amount>
        </BookRow>
      ))}
      <TradesTitle>
        <Fit w={164}>分时成交</Fit>
        <Triangle $up $w={24} $h={16} $c={GREY} $ml={10} />
      </TradesTitle>
      {trades.map(([time, amount], i) => (
        <BookRow key={i} $h={56.05}>
          <Side $size={42} w={106}>{time}</Side>
          <Deal w={106}>15.29</Deal>
          <Amount $c={GREEN} w={amountWidth(amount)}>{amount}</Amount>
        </BookRow>
      ))}
    </Book>
  );
}

/* ---------- comment strip ---------- */

const CommentStrip = styled.div`
  height: 65px;
  flex: none;
  overflow: hidden;
  display: flex;
  align-items: flex-start;
  padding: 30px 0 0 54px;
`;

const RoundButton = styled.div`
  width: 94px;
  height: 94px;
  flex: none;
  border: 2px solid #dcdfe3;
  border-radius: 50%;
  background: ${SOFT};
  padding: 24px 0 0 17px;
`;

const CommentBox = styled.div`
  width: 831px;
  height: 94px;
  margin-left: 47px;
  border: 2px solid ${LINE};
  border-radius: 47px;
  background: ${SOFT};
  overflow: hidden;
  display: flex;
  font-size: 44px;
`;

const Placeholder = styled.div`
  flex: 1;
  padding: 26px 0 0 37px;
  color: #999;
`;

const SendButton = styled.div`
  width: 118px;
  border-left: 2px solid ${LINE};
  background: #fff;
  color: ${ORANGE};
  font-weight: 900;
  font-size: 48px;
  padding: 21px 0 0 29px;
`;

/* ---------- bottom bar ---------- */

const BottomBar = styled.footer`
  height: 193px;
  flex: none;
  background: ${SOFT};
  border-top: 2px solid ${LINE};
  display: flex;
`;

const IndexBlock = styled.div`
  width: 310px;
  padding-top: 9px;
  color: ${RED};
`;

const IndexArrow = styled.div`
  height: 9px;
  padding-left: 144px;
  display: flex;
`;

const IndexValue = styled(Fit)`
  font-size: 54px;
  margin: 10px 0 0 49px;
`;

const Sector = styled.div`
  display: flex;
  gap: 10px;
  padding: 8px 0 0 8px;
  font-size: 44px;
`;

const SectorName = styled(Fit)`
  color: ${GREY};
  font-size: 43px;
`;

const Action = styled.div`
  width: 192.5px;
  display: flex;
  flex-direction: column;
  align-items: center;
  padding-top: 7px;
  font-size: 47px;
  color: ${GREY};

  & svg {
    margin-bottom: 14px;
    overflow: visible;
  }
`;

function ActionIcon({ children }) {
  return (
    <svg width="72" height="72" viewBox="0 0 72 72" fill="none" stroke={GREY} strokeWidth="3.600" strokeLinecap="round" strokeLinejoin="round">
      {children}
    </svg>
  );
}

function Footer() {
  return (
    <BottomBar>
      <IndexBlock>
        <IndexArrow><Triangle $up $w={24} $h={8} $c="#777" /></IndexArrow>
        <IndexValue w={216}>10945.56</IndexValue>
        <Sector>
          <SectorName w={170}>贸易行业</SectorName>
          <Fit w={122}>0.20%</Fit>
        </Sector>
      </IndexBlock>
      <Action>
        <ActionIcon>
          <path d="M18 11A31 31 0 0 1 62 53M54 60A31 31 0 0 1 9 21M0 24l9-3v7M72 48l-9 5V46" />
          <path d="M26 22l10 13 10-13M36 35v17M25 35h22M25 45h22" strokeWidth="3.400" />
        </ActionIcon>
        <Fit w={90}>交易</Fit>
      </Action>
      <Action>
        <ActionIcon>
          <path d="M46 6H12q-6 0-6 6v48q0 6 6 6h48q6 0 6-6V26" />
          <path d="M27 45l5-12 23-22 3 3-21 24z" fill={GREY} strokeWidth="2" />
          <path d="M61.500 8l2-2" strokeWidth="6" />
        </ActionIcon>
        <Fit w={91}>发帖</Fit>
      </Action>
      <Action>
        <ActionIcon>
          <rect x="7" y="8" width="25" height="25" rx="4" />
          <rect x="7" y="39" width="25" height="25" rx="4" />
          <rect x="39" y="39" width="25" height="25" rx="4" />
          <rect x="40.500" y="10.500" width="19.500" height="19.500" rx="2.500" transform="rotate(45 50.250 20.250)" />
        </ActionIcon>
        <Fit w={92}>功能</Fit>
      </Action>
      <Action>
        <ActionIcon>
          <circle cx="36" cy="36" r="30" />
          {[22, 36, 50].map((x) => (
            <circle key={x} cx={x} cy="36" r="3.500" fill={GREY} stroke="none" />
          ))}
        </ActionIcon>
        <Fit w={140}>设自选</Fit>
      </Action>
    </BottomBar>
  );
}

export default function App() {
  return (
    <Screen>
      <GlobalStyle />
      <Status />
      <Header />
      <Quote />
      <Notice />
      <PeriodTabs />
      <PriceInfo />
      <Board>
        <Charts>
          <PricePlot />
          <PlotHeader>
            <Picker>
              <Fit w={101}>成交额</Fit>
              <Triangle $w={16} $h={14} $c={GREY} $ml={10} />
            </Picker>
            <Turnover w={122}>20.06亿</Turnover>
          </PlotHeader>
          <VolumePlot />
          <PlotHeader>
            <Picker>
              <Fit w={101}>分时博弈</Fit>
              <Triangle $w={16} $h={14} $c={GREY} $ml={10} />
            </Picker>
            <Legend>
              <LegendItem $c="#d93030" w={91}>超大:-0.154</LegendItem>
              <LegendItem $c="#efc01f" w={91}>大户:-0.152</LegendItem>
              <LegendItem $c={BLUE} w={91}>中户:-0.089</LegendItem>
              <LegendItem $c={GREEN} w={90}>小户:0.395</LegendItem>
            </Legend>
          </PlotHeader>
          <FlowPlot />
          <TimeAxis>
            <Fit w={114}>09:15</Fit>
            <Fit w={114}>09:30</Fit>
            <Fit w={112}>15:00</Fit>
          </TimeAxis>
        </Charts>
        <OrderBook />
      </Board>
      <CommentStrip>
        <RoundButton>
          <svg width="58" height="46" viewBox="0 0 58 46" fill="none" stroke={GREY} strokeWidth="4">
            <rect x="2" y="2" width="54" height="42" rx="8" />
          </svg>
        </RoundButton>
        <CommentBox>
          <Placeholder>弹幕走一波</Placeholder>
          <SendButton>弹</SendButton>
        </CommentBox>
      </CommentStrip>
      <Footer />
    </Screen>
  );
}
